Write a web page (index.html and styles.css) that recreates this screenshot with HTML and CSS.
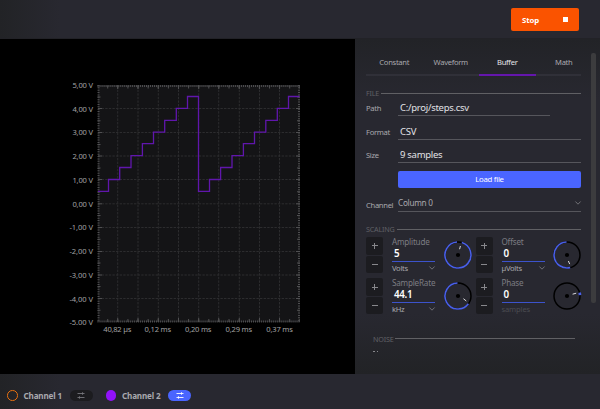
FILE: index.html
```html
<!DOCTYPE html>
<html lang="en">
<head>
<meta charset="utf-8">
<title>Signal generator</title>
<link rel="stylesheet" href="styles.css">
</head>
<body>
<div class="app">
  <header class="topbar">
    <button class="stop"><span>Stop</span><i class="stop-icon"></i></button>
  </header>
  <main class="main">
    <section class="plot">
      <svg class="chart" width="355" height="335" viewBox="0 39 355 335">
        <rect class="area" x="98" y="85" width="202" height="237"/>
        <path class="grid" d="M117.7 86V322M138 86V322M158.3 86V322M178.5 86V322M198.7 86V322M218.7 86V322M239.3 86V322M259.5 86V322M279.5 86V322"/>
        <path class="grid" d="M98 108.5H300M98 132.5H300M98 156H300M98 179.5H300M98 203.8H300M98 227.5H300M98 251.5H300M98 275H300M98 298.5H300"/>
        <path class="ticks-x" d="M97.5 86H300M97.5 321.5H300"/>
        <path class="ticks-y" d="M98.5 85V322M299 85V322"/>
        <path class="mid-x" d="M107.2 87H300M107.2 320.5H300"/>
        <path class="mid-y" d="M99 96.5V322M298.5 96.5V322"/>
        <path class="major" d="M117.7 85v4M138 85v4M158.3 85v4M178.5 85v4M198.7 85v4M218.7 85v4M239.3 85v4M259.5 85v4M279.5 85v4M117.7 322v-4M138 322v-4M158.3 322v-4M178.5 322v-4M198.7 322v-4M218.7 322v-4M239.3 322v-4M259.5 322v-4M279.5 322v-4M98 108.5h4M98 132.5h4M98 156h4M98 179.5h4M98 203.8h4M98 227.5h4M98 251.5h4M98 275h4M98 298.5h4M300 108.5h-4M300 132.5h-4M300 156h-4M300 179.5h-4M300 203.8h-4M300 227.5h-4M300 251.5h-4M300 275h-4M300 298.5h-4"/>
        <path class="wave" d="M98 191.3H108.5V179.5H119.7V167.5H131V155.7H142.4V143.7H153.5V132.2H164.7V120.3H176.3V108.4H187.5V96.5H198.5V191.3H209.5V179.5H220.6V167.5H232V155.7H243.4V143.7H254.5V132.2H265.8V120.3H277.3V108.4H288.5V96.5H299.5"/>
        <g class="axis">
          <text x="72.5" y="88" textLength="20.5">5,00 V</text>
          <text x="72.5" y="111.5" textLength="20.5">4,00 V</text>
          <text x="72.5" y="135.3" textLength="20.5">3,00 V</text>
          <text x="72.5" y="159" textLength="20.5">2,00 V</text>
          <text x="72.5" y="182.6" textLength="20.5">1,00 V</text>
          <text x="72.5" y="206.6" textLength="20.5">0,00 V</text>
          <text x="69.5" y="230.4" textLength="23.5">-1,00 V</text>
          <text x="69.5" y="254.3" textLength="23.5">-2,00 V</text>
          <text x="69.5" y="278" textLength="23.5">-3,00 V</text>
          <text x="69.5" y="301.6" textLength="23.5">-4,00 V</text>
          <text x="69.5" y="325.3" textLength="23.5">-5.00 V</text>
          <text x="103.3" y="332" textLength="28">40,82 µs</text>
          <text x="144.6" y="332" textLength="26.5">0,12 ms</text>
          <text x="185" y="332" textLength="26.5">0,20 ms</text>
          <text x="225.6" y="332" textLength="26.5">0,29 ms</text>
          <text x="266.3" y="332" textLength="26.5">0,37 ms</text>
        </g>
      </svg>
    </section>
    <aside class="panel">
      <div class="content">
        <nav class="tabs">
          <a>Constant</a><a>Waveform</a><a class="active">Buffer</a><a>Math</a>
        </nav>
        <h2 class="heading file"><span>FILE</span></h2>
        <div class="field"><label>Path</label><div class="value short">C:/proj/steps.csv</div></div>
        <div class="field"><label>Format</label><div class="value">CSV</div></div>
        <div class="field"><label>Size</label><div class="value">9 samples</div></div>
        <button class="load">Load file</button>
        <div class="field channel"><label>Channel</label><div class="value select"><span>Column 0</span><svg class="chev" viewBox="0 0 6 4"><path d="M.4.5 3 3.2 5.6.5"/></svg></div></div>
        <h2 class="heading scaling"><span>SCALING</span></h2>
        <div class="controls">
          <div class="control">
            <div class="stepper"><b class="plus"></b><b></b></div>
            <div class="param"><span class="name">Amplitude</span><strong>5</strong><div class="unit"><span>Volts</span><svg class="chev" viewBox="0 0 6 4"><path d="M.4.5 3 3.2 5.6.5"/></svg></div></div>
            <svg class="dial" viewBox="-15 -15 30 30"><circle class="track" r="13"/><path class="arc" d="M3.8 -12.4A13 13 0 1 1 -1 -12.95"/><circle class="hub" r="2.1"/><path class="mark" d="M1.6 -5.8 2.4 -9"/></svg>
          </div>
          <div class="control">
            <div class="stepper"><b class="plus"></b><b></b></div>
            <div class="param"><span class="name">Offset</span><strong>0</strong><div class="unit"><span>µVolts</span><svg class="chev" viewBox="0 0 6 4"><path d="M.4.5 3 3.2 5.6.5"/></svg></div></div>
            <svg class="dial" viewBox="-15 -15 30 30"><circle class="track" r="13"/><path class="arc" d="M3.2 12.6A13 13 0 1 1 -.5 -13"/><circle class="hub" r="2.1"/><path class="mark" d="M1.4 6 2.7 9.1"/></svg>
          </div>
          <div class="control">
            <div class="stepper"><b class="plus"></b><b></b></div>
            <div class="param"><span class="name">SampleRate</span><strong>44.1</strong><div class="unit"><span>kHz</span><svg class="chev" viewBox="0 0 6 4"><path d="M.4.5 3 3.2 5.6.5"/></svg></div></div>
            <svg class="dial" viewBox="-15 -15 30 30"><circle class="track" r="13"/><path class="arc" d="M10.4 7.8A13 13 0 1 1 -.5 -13"/><circle class="hub" r="2.1"/><path class="mark" d="M5.4 2.7 8.3 5"/></svg>
          </div>
          <div class="control">
            <div class="stepper"><b class="plus"></b><b></b></div>
            <div class="param"><span class="name">Phase</span><strong>0</strong><div class="unit off"><span>samples</span></div></div>
            <svg class="dial" viewBox="-15 -15 30 30"><circle class="track" r="13"/><path class="arc wide" d="M12.6 -3.3A13 13 0 0 1 13 -.9"/><circle class="hub" r="2.1"/><path class="mark" d="M5.6 -1.8 9.2 -2.8"/></svg>
          </div>
        </div>
        <h2 class="heading noise"><span>NOISE</span></h2>
        <div class="more"><i></i><i></i></div>
      </div>
      <div class="scrollbar"><div class="thumb"></div></div>
    </aside>
  </main>
  <footer class="channels">
    <i class="dot ring"></i><span class="ch">Channel 1</span>
    <span class="pill"><svg width="8" height="7" viewBox="0 0 8 7"><path d="M.5 1.5h7M.5 5.5h7M5.5 .3v2.4M2.5 4.3v2.4"/></svg></span>
    <i class="dot full"></i><span class="ch">Channel 2</span>
    <span class="pill on"><svg width="8" height="7" viewBox="0 0 8 7"><path d="M.5 1.5h7M.5 5.5h7M5.5 .3v2.4M2.5 4.3v2.4"/></svg></span>
  </footer>
</div>
</body>
</html>
```
FILE: styles.css
```css
* { box-sizing: border-box; }
body { margin: 0; font-family: "Noto Sans", "Open Sans", sans-serif; font-size: 7.6px; letter-spacing: -.3px; color: #a9a9ae; background: #282830; }
button { border: 0; padding: 0; font-family: inherit; letter-spacing: inherit; color: #fff; }
i, b { display: block; }
.app { width: 600px; height: 409px; display: grid; grid-template-rows: 39px 335px 35px; overflow: hidden; }
.topbar { background: linear-gradient(90deg, #222326, #282830 60px); border-bottom: 1px solid #222227; padding: 8px 21px 0 0; display: flex; justify-content: flex-end; }
.stop { width: 68px; height: 23px; background: #fa5300; border-radius: 2px; display: flex; align-items: center; justify-content: space-between; padding: 0 11px; font-size: 7.8px; font-weight: 700; letter-spacing: -.1px; }
.stop-icon { width: 5px; height: 5px; background: #fff; }
.main { display: grid; grid-template-columns: 355px 245px; }
.plot { background: #000; }
.chart { display: block; }
.area { fill: #141416; }
.grid { fill: none; stroke: #2c2c2e; stroke-width: 1; stroke-dasharray: 2.4 1.2; }
.ticks-x, .ticks-y, .mid-x, .mid-y, .major { fill: none; stroke: #505052; }
.ticks-x { stroke-width: 2; stroke-dasharray: 1 1.02; }
.ticks-y { stroke-width: 2; stroke-dasharray: 1 1.37; }
.mid-x { stroke-width: 3; stroke-dasharray: 1 9.11; }
.mid-y { stroke-width: 3; stroke-dasharray: 1 22.7; }
.wave { fill: none; stroke: #6016ac; stroke-width: 1.3; }
.axis { fill: #a0a0a2; font-size: 7.6px; letter-spacing: 0; }
.panel { display: grid; grid-template-columns: 226px 1fr; background: linear-gradient(#222327, #282830 60px, #282830 275px, #222326 335px); }
.content { padding: 12px 0 0 11px; }
.tabs { display: grid; grid-template-columns: repeat(4, 56.5px); height: 25px; border-bottom: 2px solid #303038; text-align: center; }
.tabs a { line-height: 23px; height: 25px; }
.tabs a.active { color: #e4e4e8; border-bottom: 2px solid #6416ac; }
.heading { margin: 0; display: flex; align-items: center; gap: 2px; height: 10px; font-size: 7.2px; line-height: 10px; letter-spacing: -.2px; font-weight: 400; color: #606066; }
.heading::after { content: ""; flex: 1; height: 1px; background: #606064; }
.file { margin-top: 12.4px; }
.field { display: grid; grid-template-columns: 32px 1fr; height: 23.2px; line-height: 21px; }
.value { height: 18px; line-height: 20px; font-size: 9.5px; letter-spacing: -.28px; color: #e2e2e6; padding-left: 2px; border-bottom: 1px solid #56565c; }
.value.short { width: 152px; }
.load { display: block; width: 183px; height: 17px; margin: 3px 0 0 32px; background: #4a65ff; border-radius: 2px; font-size: 7.8px; }
.channel { margin-top: 6.5px; height: 30px; line-height: 22px; }
.select { font-size: 8.2px; color: #a9a9ae; padding: 0; display: flex; justify-content: space-between; align-items: center; }
.chev { width: 6px; height: 4px; overflow: visible; }
.chev path { fill: none; stroke: #77777c; stroke-width: .9; }
.controls { display: grid; grid-template-columns: 109.5px 105px; grid-template-rows: 41.3px 41.3px; margin-top: 2.6px; }
.control { display: grid; grid-template-columns: 26px 43px 30px; align-content: start; }
.stepper { width: 17px; display: grid; grid-template-rows: 17.5px 17.5px; gap: 1px; height: 36px; }
.stepper b { background: linear-gradient(#88888c, #88888c) center / 6px 1px no-repeat #1c1c20; border-radius: 2px; }
.stepper .plus { background: linear-gradient(#88888c, #88888c) center / 6px 1px no-repeat, linear-gradient(#88888c, #88888c) center / 1px 6px no-repeat #1c1c20; }
.param { display: grid; grid-template-rows: 10px 14.6px 13px; }
.name { font-size: 8.1px; line-height: 9px; letter-spacing: -.2px; color: #7c7c82; }
.param strong { color: #fff; font-size: 9.8px; line-height: 13.5px; font-weight: 600; padding-left: 2px; border-bottom: 1px solid #3c53cc; }
.unit { display: flex; align-items: center; justify-content: space-between; line-height: 13px; }
.unit.off { color: #4c4c52; letter-spacing: -.15px; }
.dial { width: 30px; height: 30px; margin: 3px 0 0 8px; }
.control:nth-child(even) .dial { margin-left: 7px; }
.dial circle, .dial path { fill: none; }
.dial .track { stroke: #000; stroke-width: 1.5; }
.dial .arc { stroke: #4a60e8; stroke-width: 1.6; }
.dial .arc.wide { stroke-width: 2.6; }
.dial circle.hub { fill: #000; }
.dial .mark { stroke: #dcdce0; stroke-width: 1; }
.noise { margin: 14px 6px 0 7px; }
.more { display: flex; gap: 2px; margin: 7px 0 0 7px; }
.more i { width: 1.5px; height: 1px; background: #88888c; }
.scrollbar { padding: 14px 0 0 10px; }
.thumb { width: 5px; height: 250px; border-radius: 2px; background: #3c3c3e; }
.channels { background: linear-gradient(90deg, #222326, #282830 60px); display: flex; align-items: center; padding: 8px 0 0 7px; }
.dot { width: 10.5px; height: 10.5px; border-radius: 50%; }
.ring { border: 1.5px solid #e87010; }
.full { background: #9212fa; margin-left: 13px; }
.ch { width: 46px; margin-left: 6px; font-size: 8.1px; font-weight: 700; letter-spacing: -.15px; line-height: 12px; }
.pill { width: 23px; height: 11px; border-radius: 6px; background: #1c1c1f; color: #77777c; display: flex; align-items: center; justify-content: center; }
.pill.on { background: #4a65ff; color: #fff; }
.pill path { stroke: currentColor; stroke-width: .9; fill: none; }
```
